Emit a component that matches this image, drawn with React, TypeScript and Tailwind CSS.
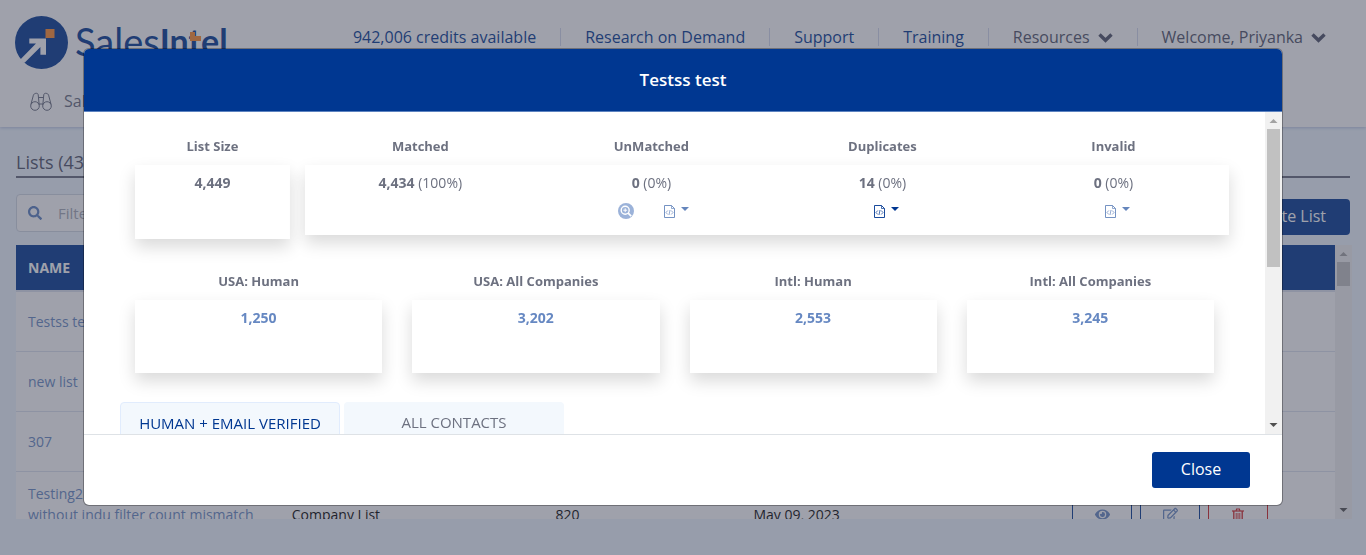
import type { ReactNode } from 'react';
import { FaEye, FaRegEdit, FaSearch } from 'react-icons/fa';

function LogoMark() {
  return (
    <svg viewBox="0 0 53 53" className="size-[53px] shrink-0" aria-hidden="true">
      <circle cx="26.5" cy="26.5" r="26.5" fill="#003791" />
      <path d="M14.3 22.6H31V38.8H25.4V31L9.6 46.8 5 44.4 6.3 42.6 21 27.4H14.3Z" fill="#fff" />
      <rect x="30.5" y="13" width="9" height="9" fill="#ff8a2b" />
    </svg>
  );
}

function Logo() {
  return (
    <a href="#home" className="flex items-start pt-4 pl-[15px]" aria-label="SalesIntel home">
      <LogoMark />
      <span className="flex items-start pt-[5px] pl-[7px] font-[Lato,sans-serif] leading-10 whitespace-nowrap text-[#003791]">
        <span className="text-[38px]">Sales</span>
        <span className="relative text-[34px] font-bold">
          Intel
          <svg viewBox="0 0 12 9" className="absolute top-[11px] left-[29px] h-[9px] w-3" aria-hidden="true">
            <path d="M1 0H6V4H12V9H1Z" fill="#ff8a2b" />
          </svg>
        </span>
      </span>
    </a>
  );
}

function Binoculars() {
  return (
    <svg viewBox="0 0 22 19" className="h-[19px] w-[22px]" fill="none" stroke="#666b7c" strokeWidth="1" aria-hidden="true">
      <circle cx="5" cy="14" r="4.3" />
      <circle cx="17" cy="14" r="4.3" />
      <path d="M.9 12.5 3.4 3.2C3.8 1.2 7.8.4 8.2 2.6L9.2 13M21.1 12.5 18.6 3.2C18.2 1.2 14.2.4 13.8 2.6L12.8 13M9 5.5H13M9.2 12H12.8" />
    </svg>
  );
}

function Chevron() {
  return (
    <svg viewBox="0 0 15 10" className="mt-0.5 h-[10px] w-[15px]" fill="none" stroke="currentColor" strokeWidth="3.4" aria-hidden="true">
      <path d="M1.5 1.5 7.5 7.3 13.5 1.5" />
    </svg>
  );
}

function Trash() {
  return (
    <svg viewBox="0 0 12 14" className="h-[14px] w-3" fill="none" stroke="currentColor" aria-hidden="true">
      <path d="M0 3H12" strokeWidth="1.2" />
      <path d="M4 3 4.6 1H7.4L8 3" strokeWidth="1.1" />
      <path d="M1.8 3V12.2Q1.8 13.3 2.8 13.3H9.2Q10.2 13.3 10.2 12.2V3" strokeWidth="1.3" />
      <path d="M4.2 5V11M6 5V11M7.8 5V11" strokeWidth="0.9" />
    </svg>
  );
}

function NavItem({ children, dark, first }: { children: ReactNode; dark?: boolean; first?: boolean }) {
  return (
    <a
      href="#nav"
      className={`flex h-[18px] items-center gap-2 px-6 whitespace-nowrap ${first ? '' : 'border-l border-[#d3d9ec]'} ${dark ? 'text-[#4d5166]' : 'text-[#003791]'}`}
    >
      {children}
    </a>
  );
}

function ScrollBar({ thumb }: { thumb: string }) {
  return (
    <div className="flex w-[17px] shrink-0 flex-col items-center bg-[#f1f1f1]" aria-hidden="true">
      <svg viewBox="0 0 17 17" className="size-[17px] shrink-0"><path d="M4.5 11 8.5 7 12.5 11Z" fill="#a3a3a3" /></svg>
      <div className={`w-[13px] bg-[#c1c1c1] ${thumb}`} />
      <svg viewBox="0 0 17 17" className="mt-auto size-[17px] shrink-0"><path d="M4.5 6 8.5 10 12.5 6Z" fill="#505050" /></svg>
    </div>
  );
}

function FileCode() {
  return (
    <svg viewBox="0 0 11 13" className="h-[13px] w-[11px]" fill="none" stroke="currentColor" aria-hidden="true">
      <path d="M.5.5H7.5L10.5 3.5V12.5H.5Z" strokeWidth=".9" />
      <path d="M7.5.5V3.5H10.5M3.8 5.5 2 7.5 3.8 9.5M7.2 5.5 9 7.5 7.2 9.5M6 5 5 10" strokeWidth=".7" />
    </svg>
  );
}

function Export({ enabled }: { enabled?: boolean }) {
  return (
    <button type="button" aria-label="Export" className={`flex gap-1.5 text-[#003791] ${enabled ? '' : 'opacity-60'}`}>
      <FileCode />
      <svg viewBox="0 0 8 4" className="mt-0.5 h-1 w-2" aria-hidden="true"><path d="M0 0H8L4 4Z" fill="currentColor" /></svg>
    </button>
  );
}

function ZoomBadge() {
  return (
    <button type="button" aria-label="View unmatched" className="opacity-60">
      <svg viewBox="0 0 16 16" className="size-4" aria-hidden="true">
        <circle cx="8" cy="8" r="8" fill="#5a80c0" />
        <circle cx="7.2" cy="7.2" r="4" fill="none" stroke="#fff" strokeWidth="1.4" />
        <path d="M10.2 10.2 13.2 13.2" stroke="#fff" strokeWidth="1.8" />
        <path d="M7.2 5.3V9.1M5.3 7.2H9.1" stroke="#fff" strokeWidth="1" />
      </svg>
    </button>
  );
}

const label = 'text-center text-[13px] leading-5 font-bold text-[#6d7180]';
const shadow = 'bg-white shadow-[0_8px_16px_rgba(0,0,0,0.15)]';

const matches = [
  { name: 'Matched', count: '4,434', share: '(100%)', tools: null },
  { name: 'UnMatched', count: '0', share: '(0%)', tools: <div className="flex items-center justify-center gap-[30px] pl-1"><ZoomBadge /><Export /></div> },
  { name: 'Duplicates', count: '14', share: '(0%)', tools: <div className="flex h-4 items-center justify-center pl-2"><Export enabled /></div> },
  { name: 'Invalid', count: '0', share: '(0%)', tools: <div className="flex h-4 items-center justify-center pl-2"><Export /></div> },
];

const segments = [
  ['USA: Human', '1,250'],
  ['USA: All Companies', '3,202'],
  ['Intl: Human', '2,553'],
  ['Intl: All Companies', '3,245'],
];

const rows = [
  { name: 'Testss test', type: 'Company List', size: '4,449', date: 'May 10, 2023' },
  { name: 'new list', type: 'Company List', size: '120', date: 'May 10, 2023' },
  { name: '307', type: 'Company List', size: '307', date: 'May 09, 2023' },
];

function Summary() {
  return (
    <div className="min-w-0 flex-1 overflow-hidden pt-6 pl-9">
      <div className="mr-9">
        <div className="grid grid-cols-6">
          <div className="px-[15px]">
            <h3 className={label}>List Size</h3>
            <div className={`mt-[9px] h-[74px] pt-2 text-center text-sm font-bold text-[#6d7180] ${shadow}`}>4,449</div>
          </div>
          <div className="col-span-5">
            <div className="grid grid-cols-4">
              {matches.map((m) => <h3 key={m.name} className={label}>{m.name}</h3>)}
            </div>
            <div className={`mt-[9px] grid h-[70px] grid-cols-4 pt-2 ${shadow}`}>
              {matches.map((m) => (
                <div key={m.name} className="text-center text-sm text-[#6d7180]">
                  <p className="mb-[10px]"><b className="font-bold">{m.count}</b> {m.share}</p>
                  {m.tools}
                </div>
              ))}
            </div>
          </div>
        </div>
        <div className="mt-8 grid grid-cols-4">
          {segments.map(([name, count]) => (
            <div key={name} className="px-[15px]">
              <h3 className={label}>{name}</h3>
              <div className={`mt-[9px] h-[73px] pt-2 text-center text-sm font-bold ${shadow}`}>
                <a href="#segment" className="text-[#6688c2]">{count}</a>
              </div>
            </div>
          ))}
        </div>
        <div className="mt-[29px] flex gap-1 text-[15px]" role="tablist">
          <button type="button" role="tab" aria-selected="true" className="h-[42px] w-[220px] rounded-t border border-[#e1ecfd] bg-[#f3f8fd] whitespace-nowrap text-[#003791]">HUMAN + EMAIL VERIFIED</button>
          <button type="button" role="tab" aria-selected="false" className="h-10 w-[220px] rounded-t bg-[#f3f8fd] text-[#6d7180]">ALL CONTACTS</button>
        </div>
      </div>
    </div>
  );
}

function Modal() {
  return (
    <div className="fixed inset-0 bg-[#3f4357]/50 px-4 pt-12">
      <div role="dialog" aria-label="Testss test" className="mx-auto max-w-[1200px] overflow-hidden rounded-md border border-black/30 bg-white bg-clip-padding">
        <h2 className="border-b border-[#5d83c0] bg-[#003791] text-center text-[17px] leading-[62px] font-semibold text-white">Testss test</h2>
        <div className="flex h-[calc(100vh-233px)]">
          <Summary />
          <ScrollBar thumb="h-[138px]" />
        </div>
        <div className="flex justify-end border-t border-[#dee2e6] px-8 py-[17px]">
          <button type="button" className="flex h-9 w-[98px] justify-center rounded-[3px] bg-[#003791] text-base leading-[34px] text-white">Close</button>
        </div>
      </div>
    </div>
  );
}

const action = 'flex h-9 w-[60px] items-center justify-center rounded-[3px] border';

export default function App() {
  return (
    <div className="h-screen overflow-hidden bg-[#eff7ff] font-['Open_Sans',sans-serif]">
      <header className="h-[127px] bg-white shadow-[0_1px_3px_rgba(60,80,160,0.3)]">
        <div className="flex justify-between">
          <Logo />
          <nav className="flex items-start pt-7 pr-4 text-base">
            <NavItem first>942,006 credits available</NavItem>
            <NavItem>Research on Demand</NavItem>
            <NavItem>Support</NavItem>
            <NavItem>Training</NavItem>
            <NavItem dark>Resources <Chevron /></NavItem>
            <NavItem dark>Welcome, Priyanka <Chevron /></NavItem>
          </nav>
        </div>
        <a href="#search" className="flex items-center gap-3 pt-5 pl-[30px] text-base text-[#666b7c]">
          <Binoculars />
          Sales Search
        </a>
      </header>

      <main className="px-4 pt-[21px]">
        <h1 className="border-b-2 border-[#666b7c] text-lg leading-7 text-[#4d5166]">Lists (43)</h1>
        <div className="mt-4 flex justify-between">
          <label className="flex h-[38px] w-[300px] items-center gap-4 rounded border border-[#d0d8e2] bg-white px-[11px]">
            <FaSearch className="size-[14px] shrink-0 text-[#5a80c0]" />
            <input type="text" placeholder="Filter" aria-label="Filter" className="w-full text-[15px] outline-none placeholder:text-[#a4a8b4]" />
          </label>
          <button type="button" className="mt-[5px] flex h-9 rounded bg-[#003791] px-6 text-base leading-[34px] text-white">Create List</button>
        </div>

        <div className="-mr-0.5 mt-[10px] flex h-[274px] overflow-hidden bg-white">
          <table className="w-full table-fixed self-start text-left text-sm leading-[21px]">
            <colgroup>
              <col className="w-[20%]" />
              <col className="w-[20%]" />
              <col className="w-[15%]" />
              <col />
              <col className="w-[275px]" />
            </colgroup>
            <thead>
              <tr className="h-[46px] border-b-2 border-[#dde2ee] bg-[#003791] font-bold text-white">
                <th className="px-3">NAME</th>
                <th className="px-3">TYPE</th>
                <th className="px-3">SIZE</th>
                <th className="px-3">DATE</th>
                <th className="px-3">ACTIONS</th>
              </tr>
            </thead>
            <tbody>
              {rows.map((r) => (
                <tr key={r.name} className="h-[60px] border-b border-[#dde2ee]">
                  <td className="px-3"><a href="#list" className="text-[#6688c2]">{r.name}</a></td>
                  <td className="px-3">{r.type}</td>
                  <td className="px-3">{r.size}</td>
                  <td className="px-3">{r.date}</td>
                  <td />
                </tr>
              ))}
              <tr className="h-[87px]">
                <td className="px-3"><a href="#list" className="text-[#6688c2]">Testing2<br />without indu filter count mismatch<br />check</a></td>
                <td className="px-3">Company List</td>
                <td className="px-3">820</td>
                <td className="px-3">May 09, 2023</td>
                <td className="px-3">
                  <div className="flex gap-2">
                    <button type="button" aria-label="View" className={`${action} border-[#003791] text-[#6688c2]`}><FaEye className="size-[15px]" /></button>
                    <button type="button" aria-label="Edit" className={`${action} border-[#003791] text-[#6688c2]`}><FaRegEdit className="size-[15px]" /></button>
                    <button type="button" aria-label="Delete" className={`${action} border-[#d32020] text-[#d32020]`}><Trash /></button>
                  </div>
                </td>
              </tr>
            </tbody>
          </table>
          <ScrollBar thumb="h-6" />
        </div>
      </main>
      <Modal />
    </div>
  );
}
